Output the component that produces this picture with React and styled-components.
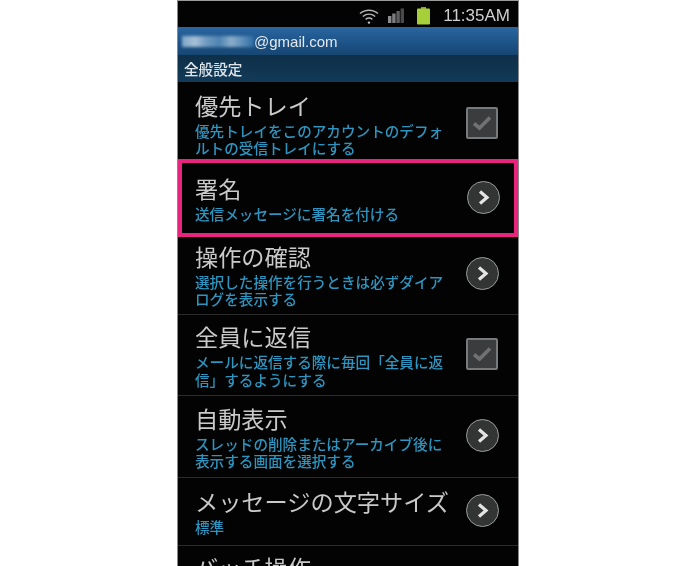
import React from "react";
import styled, { createGlobalStyle } from "styled-components";

const GlobalStyle = createGlobalStyle`
  html, body {
    margin: 0;
    padding: 0;
    background: #ffffff;
    height: 566px;
    overflow: hidden;
  }
`;

const Page = styled.div`
  width: 696px;
  height: 566px;
  display: flex;
  justify-content: center;
  overflow: hidden;
  font-family: "Roboto", "Noto Sans CJK JP", sans-serif;
`;

const Phone = styled.div`
  width: 342px;
  height: 566px;
  box-sizing: border-box;
  background: #040304;
  border-left: 1.5px solid #8a8a8a;
  border-right: 1.5px solid #8a8a8a;
  border-top: 1px solid #9a9a9a;
  overflow: hidden;
  filter: blur(0.5px);
`;

const StatusBar = styled.div`
  box-sizing: border-box;
  height: 26px;
  display: flex;
  align-items: center;
  justify-content: flex-end;
  padding: 3px 8px 0 0;
  background: #030303;
`;

const Clock = styled.span`
  font-family: "Liberation Sans", sans-serif;
  font-size: 17px;
  color: #cfcfcf;
  margin-left: 13px;
`;

const AccountBar = styled.div`
  height: 28px;
  display: flex;
  align-items: center;
  padding-left: 4px;
  background: linear-gradient(#2a66a0, #1c5286 60%, #174672);
  font-family: "Liberation Sans", sans-serif;
  font-size: 15px;
  color: #e4e8ec;
`;

const BlurredName = styled.span`
  width: 72px;
  height: 11px;
  margin-top: 1px;
  background: linear-gradient(90deg, #7fa6c8 0%, #a7c0d6 18%, #6f99bf 34%, #4f83b2 52%, #8badc9 68%, #5d8fb9 84%, #2f6ba2 100%);
  filter: blur(1.4px);
`;

const SectionBar = styled.div`
  height: 27px;
  display: flex;
  align-items: center;
  padding-left: 6px;
  background: linear-gradient(#0e2f48, #123a58);
  font-family: "Noto Sans CJK JP", sans-serif;
  font-size: 14.6px;
  font-weight: 500;
  color: #dfe5e9;
`;

const Row = styled.div`
  box-sizing: border-box;
  height: ${(p) => p.$height}px;
  display: flex;
  align-items: ${(p) => (p.$cut ? "flex-start" : "center")};
  justify-content: space-between;
  padding: ${(p) => p.$top || 0}px 20px ${(p) => p.$bottom || 0}px ${(p) => (p.$marked ? 13 : 17)}px;
  border-bottom: 1px solid ${(p) => (p.$line ? "#2b2b2b" : "transparent")};
  ${(p) => p.$marked && "border: 4px solid #e8247f; padding-right: 15px;"}
`;

const RowText = styled.div`
  display: flex;
  flex-direction: column;
  min-width: 0;
`;

const Title = styled.div`
  font-family: "Noto Sans CJK JP", sans-serif;
  font-size: 23.2px;
  line-height: 33px;
  color: #c9c9c9;
  white-space: nowrap;
`;

const Summary = styled.div`
  font-family: "Noto Sans CJK JP", sans-serif;
  font-size: 14.6px;
  font-weight: 500;
  line-height: 17.5px;
  color: #2d95bf;
  white-space: pre;
`;

const Box = styled.div`
  width: 32px;
  height: 32px;
  box-sizing: border-box;
  border: 2px solid #77797a;
  border-radius: 2px;
  background: #3a3c3d;
  display: flex;
  align-items: center;
  justify-content: center;
  flex-shrink: 0;
`;

const Round = styled.div`
  width: 33px;
  height: 33px;
  box-sizing: border-box;
  border: 1.5px solid #9b9d9c;
  border-radius: 50%;
  background: #333534;
  display: flex;
  align-items: center;
  justify-content: center;
  flex-shrink: 0;
  margin-right: -1px;
`;

const WifiIcon = () => (
  <svg width="20" height="20" viewBox="0 0 20 20" fill="none" stroke="#b5b5b5" strokeWidth="1.5">
    <path d="M1 7.5C6 3 14 3 19 7.5" />
    <path d="M3.8 10.5C7.5 7.5 12.5 7.5 16.2 10.5" />
    <path d="M6.6 13.3C8.6 11.8 11.4 11.8 13.4 13.3" />
    <circle cx="10" cy="16.6" r="1.2" fill="#c5c5c5" stroke="none" />
  </svg>
);

const SignalIcon = () => (
  <svg width="17" height="16" viewBox="0 0 17 16" style={{ marginLeft: 9 }}>
    <rect x="0" y="8" width="3.4" height="7" fill="#8c8c8c" />
    <rect x="4.2" y="5.5" width="3.4" height="9.5" fill="#7d7d7d" />
    <rect x="8.4" y="3" width="3.4" height="12" fill="#5f5f5f" />
    <rect x="12.6" y="0.5" width="3.4" height="14.5" fill="#4a4a4a" />
  </svg>
);

const BatteryIcon = () => (
  <svg width="13" height="18" viewBox="0 0 13 18" style={{ marginLeft: 12 }}>
    <rect x="4" y="0" width="5" height="2" fill="#7fa52c" />
    <rect x="0" y="1.5" width="13" height="16" rx="1" fill="#a6cf3a" />
  </svg>
);

const CheckIcon = () => (
  <svg width="20" height="16" viewBox="0 0 20 16" fill="none" stroke="#6f7172" strokeWidth="3.6">
    <path d="M2 8.5L7.5 13L18 2.5" />
  </svg>
);

const ChevronIcon = () => (
  <svg width="15" height="17" viewBox="0 0 15 17" fill="none" stroke="#e4e4e4" strokeWidth="3.2">
    <path d="M4 2.5L11 8.5L4 14.5" />
  </svg>
);

const rows = [
  { title: "優先トレイ", summary: "優先トレイをこのアカウントのデフォ\nルトの受信トレイにする", height: 77, kind: "check", top: 5 },
  { title: "署名", summary: "送信メッセージに署名を付ける", height: 78, kind: "arrow", marked: true, bottom: 2 },
  { title: "操作の確認", summary: "選択した操作を行うときは必ずダイア\nログを表示する", height: 78, kind: "arrow", line: true, bottom: 4 },
  { title: "全員に返信", summary: "メールに返信する際に毎回「全員に返\n信」するようにする", height: 81, kind: "check", line: true, bottom: 2 },
  { title: "自動表示", summary: "スレッドの削除またはアーカイブ後に\n表示する画面を選択する", height: 82, kind: "arrow", line: true, bottom: 2 },
  { title: "メッセージの文字サイズ", summary: "標準", height: 68, kind: "arrow", line: true, bottom: 3 },
  { title: "バッチ操作", summary: "", height: 60, kind: "none", top: 5, cut: true },
];

export default function App() {
  return (
    <Page>
      <GlobalStyle />
      <Phone>
        <StatusBar>
          <WifiIcon />
          <SignalIcon />
          <BatteryIcon />
          <Clock>11:35AM</Clock>
        </StatusBar>
        <AccountBar>
          <BlurredName />
          @gmail.com
        </AccountBar>
        <SectionBar>全般設定</SectionBar>
        {rows.map((row) => (
          <Row
            key={row.title}
            $height={row.height}
            $marked={row.marked}
            $line={row.line}
            $top={row.top}
            $bottom={row.bottom}
            $cut={row.cut}
          >
            <RowText>
              <Title>{row.title}</Title>
              {row.summary && <Summary>{row.summary}</Summary>}
            </RowText>
            {row.kind === "check" && (
              <Box>
                <CheckIcon />
              </Box>
            )}
            {row.kind === "arrow" && (
              <Round>
                <ChevronIcon />
              </Round>
            )}
          </Row>
        ))}
      </Phone>
    </Page>
  );
}
